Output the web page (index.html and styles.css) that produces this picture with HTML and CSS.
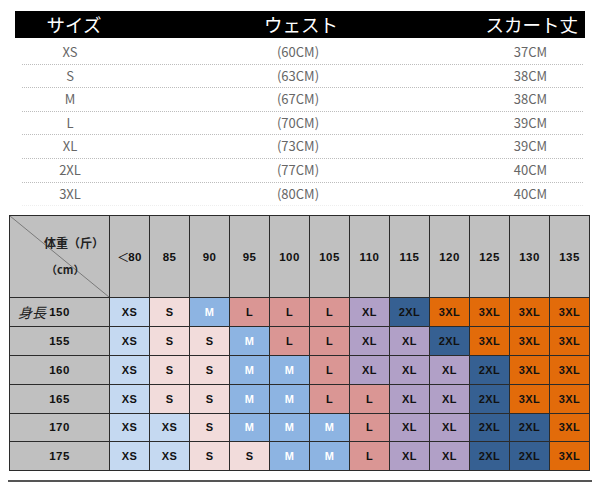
FILE: index.html
```html
<!DOCTYPE html>
<html lang="ja">
<head>
<meta charset="utf-8">
<link rel="stylesheet" href="styles.css">
</head>
<body>
<div class="page">
  <section class="sizes">
    <div class="sizes-head">
      <div class="h1">サイズ</div>
      <div class="h2">ウェスト</div>
      <div class="h3">スカート丈</div>
    </div>
    <div class="sizes-body">
      <div class="srow"><span>XS</span><span>(60CM)</span><span>37CM</span></div>
      <div class="srow"><span>S</span><span>(63CM)</span><span>38CM</span></div>
      <div class="srow"><span>M</span><span>(67CM)</span><span>38CM</span></div>
      <div class="srow"><span>L</span><span>(70CM)</span><span>39CM</span></div>
      <div class="srow"><span>XL</span><span>(73CM)</span><span>39CM</span></div>
      <div class="srow"><span>2XL</span><span>(77CM)</span><span>40CM</span></div>
      <div class="srow last"><span>3XL</span><span>(80CM)</span><span>40CM</span></div>
    </div>
  </section>

  <section class="chart">
    <div class="corner">
      <svg class="diag" viewBox="0 0 100 100" preserveAspectRatio="none"><line x1="0" y1="0" x2="100" y2="100" stroke="#7a7a7a" stroke-width="1" vector-effect="non-scaling-stroke"/></svg>
      <span class="w">体重（斤）</span>
      <span class="cm">（cm）</span>
    </div>
    <div class="hd"><span class="lt">＜</span>80</div><div class="hd">85</div><div class="hd">90</div><div class="hd">95</div><div class="hd">100</div><div class="hd">105</div><div class="hd">110</div><div class="hd">115</div><div class="hd">120</div><div class="hd">125</div><div class="hd">130</div><div class="hd">135</div>

    <div class="rl"><span class="sh">身長</span>150</div>
    <div class="c xs">XS</div><div class="c s">S</div><div class="c m">M</div><div class="c l">L</div><div class="c l">L</div><div class="c l">L</div><div class="c xl">XL</div><div class="c x2">2XL</div><div class="c x3">3XL</div><div class="c x3">3XL</div><div class="c x3">3XL</div><div class="c x3">3XL</div>

    <div class="rl">155</div>
    <div class="c xs">XS</div><div class="c s">S</div><div class="c s">S</div><div class="c m">M</div><div class="c l">L</div><div class="c l">L</div><div class="c xl">XL</div><div class="c xl">XL</div><div class="c x2">2XL</div><div class="c x3">3XL</div><div class="c x3">3XL</div><div class="c x3">3XL</div>

    <div class="rl">160</div>
    <div class="c xs">XS</div><div class="c s">S</div><div class="c s">S</div><div class="c m">M</div><div class="c m">M</div><div class="c l">L</div><div class="c xl">XL</div><div class="c xl">XL</div><div class="c xl">XL</div><div class="c x2">2XL</div><div class="c x3">3XL</div><div class="c x3">3XL</div>

    <div class="rl">165</div>
    <div class="c xs">XS</div><div class="c s">S</div><div class="c s">S</div><div class="c m">M</div><div class="c m">M</div><div class="c l">L</div><div class="c l">L</div><div class="c xl">XL</div><div class="c xl">XL</div><div class="c x2">2XL</div><div class="c x3">3XL</div><div class="c x3">3XL</div>

    <div class="rl">170</div>
    <div class="c xs">XS</div><div class="c xs">XS</div><div class="c s">S</div><div class="c m">M</div><div class="c m">M</div><div class="c m">M</div><div class="c l">L</div><div class="c xl">XL</div><div class="c xl">XL</div><div class="c x2">2XL</div><div class="c x2">2XL</div><div class="c x3">3XL</div>

    <div class="rl">175</div>
    <div class="c xs">XS</div><div class="c xs">XS</div><div class="c s">S</div><div class="c s">S</div><div class="c m">M</div><div class="c m">M</div><div class="c l">L</div><div class="c xl">XL</div><div class="c xl">XL</div><div class="c x2">2XL</div><div class="c x2">2XL</div><div class="c x3">3XL</div>
  </section>
  <div class="baseline"></div>
</div>
</body>
</html>
```

FILE: styles.css
```css
* { box-sizing: border-box; }
html, body { margin: 0; padding: 0; background: #fff; }
body { width: 600px; height: 483px; overflow: hidden; }

.page { padding-top: 11px; }

.sizes { margin: 0 15px; }
.sizes-head {
  display: grid;
  grid-template-columns: 118px 336px 116px;
  height: 27px;
  background: #000;
  color: #fff;
  font-family: "Noto Sans CJK JP", sans-serif;
  font-size: 18.5px;
  line-height: 27px;
}
.sizes-head .h1, .sizes-head .h2 { text-align: center; }
.sizes-head .h3 { text-align: right; padding-right: 7px; }

.sizes-body {
  margin: 3px 2px 0 7px;
  font-family: "Noto Sans CJK JP", sans-serif;
  font-size: 13px;
  color: #666;
}
.srow {
  display: grid;
  grid-template-columns: 96px 360px 1fr;
  height: 23.6px;
  line-height: 22px;
  border-bottom: 1px dotted #bdbdbd;
  text-align: center;
}
.srow.last { border-bottom-color: #eee; }

.chart {
  margin: 9px 0 0 9px;
  width: 581px;
  display: grid;
  grid-template-columns: 99px repeat(12, 39px);
  grid-template-rows: 81px repeat(6, 27.85px);
  gap: 1px;
  background: #2b2b2b;
  border: 1px solid #2b2b2b;
  font-family: "Liberation Sans", Arial, sans-serif;
  font-weight: bold;
  font-size: 11px;
  letter-spacing: 0.4px;
  color: #111;
}
.chart > div {
  display: flex;
  align-items: center;
  justify-content: center;
}
.corner {
  position: relative;
  background: #c0c0c0;
  flex-direction: column;
}
.corner .diag { position: absolute; left: 0; top: 0; width: 100%; height: 100%; }
.corner .w {
  position: absolute; left: 34px; top: 18px;
  font-family: "Noto Sans CJK SC", sans-serif;
  font-size: 12px; font-weight: bold; letter-spacing: 0; color: #222;
}
.corner .cm {
  position: absolute; left: 36px; top: 45px;
  font-family: "Noto Sans CJK SC", sans-serif;
  font-size: 11px; font-weight: bold; letter-spacing: 0; color: #222;
}
.hd { background: #c0c0c0; font-size: 11.5px; }
.hd .lt {
  font-family: "Noto Sans CJK JP", sans-serif;
  font-weight: normal; font-size: 12px; letter-spacing: 0;
  margin-right: -1px;
}
.rl { background: #c0c0c0; position: relative; font-size: 11.5px; }
.rl .sh {
  position: absolute; left: 8px; top: 50%; transform: translateY(-50%);
  font-family: "Noto Sans CJK JP", serif;
  font-weight: normal; font-style: italic; font-size: 14px; letter-spacing: 0; color: #222;
}
.c { font-size: 11px; }
.xs { background: #c5d9f1; }
.s { background: #f2dcdb; }
.m { background: #8db4e2; color: #fff; }
.l { background: #da9694; }
.xl { background: #b1a0c7; }
.x2 { background: #366092; color: #111; }
.x3 { background: #e26b0a; }

.baseline {
  margin: 9px 8px 0 8px;
  height: 2px;
  background: #555;
}
```
